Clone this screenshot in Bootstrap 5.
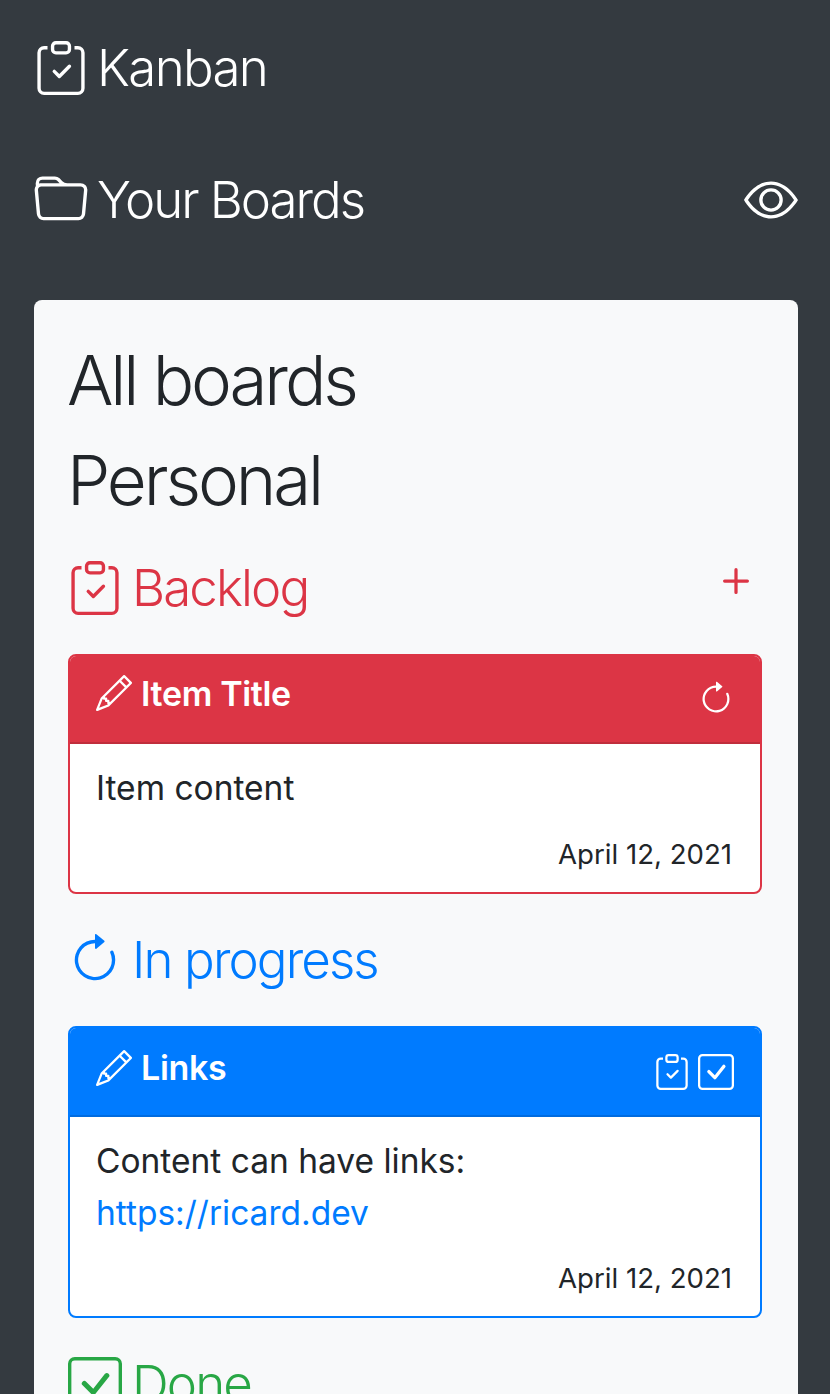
<!DOCTYPE html>
<html lang="en">
<head>
    <meta charset="UTF-8">
    <meta name="viewport" content="width=device-width, initial-scale=1.0">
    <title>Kanban</title>

    <link href="https://cdn.jsdelivr.net/npm/bootstrap@5.3.0/dist/css/bootstrap.min.css" rel="stylesheet">
    <script src="https://cdn.jsdelivr.net/npm/bootstrap@5.3.0/dist/js/bootstrap.bundle.min.js"></script>

    <style>
        html, body {
            height: 100vh;
            overflow: hidden;
        }
        body {
            background-color: #343a40;
            font-family: "Inter", "Liberation Sans", sans-serif;
            font-size: 32px;
            color: #212529;
            padding: 40px 32px 0 34px;
        }
        .ico {
            width: 1em;
            height: 1em;
            fill: currentColor;
            flex: none;
        }
        .app-title, .boards-title {
            font-size: 51px;
            font-weight: 300;
            line-height: 56px;
            letter-spacing: -.033em;
            color: #fff;
            margin: 0;
            gap: 9px;
        }
        .boards-title {
            letter-spacing: -.04em;
        }
        .app-title .ico, .boards-title .ico {
            font-size: 54px;
        }
        .app-title {
            margin-bottom: 76px;
        }
        .boards-row {
            margin-bottom: 72px;
        }
        .boards-eye {
            color: #fff;
            font-size: 54px;
            line-height: 0;
        }
        .board-panel {
            background-color: #f8f9fa;
            border-radius: 8px;
            padding: 40px 36px 0 34px;
            min-height: 1200px;
        }
        .panel-title {
            font-size: 69px;
            font-weight: 300;
            line-height: 80px;
            letter-spacing: -.045em;
            margin: 0 0 20px -1px;
        }
        .panel-title + .column-row {
            margin-top: 40px;
        }
        .column-title {
            font-size: 51px;
            font-weight: 300;
            line-height: 56px;
            letter-spacing: -.037em;
            margin: 0;
            gap: 10px;
        }
        .column-title .ico {
            font-size: 54px;
        }
        .column-row {
            margin-bottom: 38px;
        }
        .column-add {
            font-size: 52px;
            line-height: 0;
            margin-top: -14px;
        }
        .tone-red { color: #dc3545; }
        .tone-blue { color: #007bff; }
        .tone-green { color: #28a745; }
        .item-card {
            border-width: 2px;
            border-radius: 8px;
            margin-bottom: 38px;
            background: #fff;
        }
        .item-card.tone-red { border-color: #dc3545; }
        .item-card.tone-blue { border-color: #007bff; }
        .item-card .card-header {
            color: #fff;
            padding: 0 26px;
            height: 88px;
            border-bottom: 2px solid rgba(0, 0, 0, .125);
            border-radius: 6px 6px 0 0;
            font-size: 34px;
            font-weight: 600;
            letter-spacing: -.01em;
        }
        .item-card.tone-red .card-header { background-color: #dc3545; }
        .item-card.tone-blue .card-header {
            background-color: #007bff;
            height: 89px;
        }
        .item-heading {
            gap: 9px;
            padding-bottom: 8px;
        }
        .tone-red .item-heading {
            padding-bottom: 12px;
        }
        .item-heading .ico {
            font-size: 36px;
        }
        .item-tools {
            gap: 8px;
            font-size: 36px;
            line-height: 0;
        }
        .item-card .card-body {
            color: #212529;
            padding: 18px 28px 18px 26px;
            font-size: 33.5px;
            line-height: 52px;
        }
        .item-text {
            margin-bottom: 20px;
        }
        .tone-blue .item-text {
            margin-bottom: 19px;
        }
        .item-text a {
            color: #007bff;
            text-decoration: none;
        }
        .item-date {
            font-size: 27.6px;
            line-height: 40px;
            text-align: right;
        }
    </style>
</head>
<body>

<svg width="0" height="0" class="position-absolute">
    <symbol id="i-clipboard" viewBox="0 0 16 16">
        <path fill-rule="evenodd" d="M10.854 7.146a.5.5 0 0 1 0 .708l-3 3a.5.5 0 0 1-.708 0l-1.5-1.5a.5.5 0 1 1 .708-.708L7.5 9.793l2.646-2.647a.5.5 0 0 1 .708 0z"/>
        <path d="M4 1.5H3a2 2 0 0 0-2 2V14a2 2 0 0 0 2 2h10a2 2 0 0 0 2-2V3.5a2 2 0 0 0-2-2h-1v1h1a1 1 0 0 1 1 1V14a1 1 0 0 1-1 1H3a1 1 0 0 1-1-1V3.5a1 1 0 0 1 1-1h1v-1z"/>
        <path d="M9.5 1a.5.5 0 0 1 .5.5v1a.5.5 0 0 1-.5.5h-3a.5.5 0 0 1-.5-.5v-1a.5.5 0 0 1 .5-.5h3zm-3-1A1.5 1.5 0 0 0 5 1.5v1A1.5 1.5 0 0 0 6.5 4h3A1.5 1.5 0 0 0 11 2.5v-1A1.5 1.5 0 0 0 9.5 0h-3z"/>
    </symbol>
    <symbol id="i-folder" viewBox="0 0 16 16">
        <path d="M.54 3.87.5 3a2 2 0 0 1 2-2h3.672a2 2 0 0 1 1.414.586l.828.828A2 2 0 0 0 9.828 3h3.982a2 2 0 0 1 1.992 2.181l-.637 7A2 2 0 0 1 13.174 14H2.826a2 2 0 0 1-1.991-1.819l-.637-7a1.99 1.99 0 0 1 .342-1.31zM2.19 4a1 1 0 0 0-.996 1.09l.637 7a1 1 0 0 0 .995.91h10.348a1 1 0 0 0 .995-.91l.637-7A1 1 0 0 0 13.81 4H2.19zm4.69-1.707A1 1 0 0 0 6.172 2H2.5a1 1 0 0 0-1 .981l.006.139C1.72 3.042 1.95 3 2.19 3h5.396l-.707-.707z"/>
    </symbol>
    <symbol id="i-eye" viewBox="0 0 16 16">
        <path d="M16 8s-3-5.5-8-5.5S0 8 0 8s3 5.5 8 5.5S16 8 16 8zM1.173 8a13.133 13.133 0 0 1 1.66-2.043C4.12 4.668 5.88 3.5 8 3.5c2.12 0 3.879 1.168 5.168 2.457A13.133 13.133 0 0 1 14.828 8c-.058.087-.122.183-.195.288-.335.48-.83 1.12-1.465 1.755C11.879 11.332 10.119 12.5 8 12.5c-2.12 0-3.879-1.168-5.168-2.457A13.134 13.134 0 0 1 1.172 8z"/>
        <path d="M8 5.5a2.5 2.5 0 1 0 0 5 2.5 2.5 0 0 0 0-5zM4.5 8a3.5 3.5 0 1 1 7 0 3.5 3.5 0 0 1-7 0z"/>
    </symbol>
    <symbol id="i-plus" viewBox="0 0 16 16">
        <path d="M8 4a.5.5 0 0 1 .5.5v3h3a.5.5 0 0 1 0 1h-3v3a.5.5 0 0 1-1 0v-3h-3a.5.5 0 0 1 0-1h3v-3A.5.5 0 0 1 8 4z"/>
    </symbol>
    <symbol id="i-arrow" viewBox="0 0 16 16">
        <path fill-rule="evenodd" d="M8 3a5 5 0 1 0 4.546 2.914.5.5 0 0 1 .908-.417A6 6 0 1 1 8 2v1z"/>
        <path d="M8 4.466V.534a.25.25 0 0 1 .41-.192l2.36 1.966c.12.1.12.284 0 .384L8.41 4.658A.25.25 0 0 1 8 4.466z"/>
    </symbol>
    <symbol id="i-pencil" viewBox="0 0 16 16">
        <path d="M12.146.146a.5.5 0 0 1 .708 0l3 3a.5.5 0 0 1 0 .708l-10 10a.5.5 0 0 1-.168.11l-5 2a.5.5 0 0 1-.65-.65l2-5a.5.5 0 0 1 .11-.168l10-10zM11.207 2.5 13.5 4.793 14.793 3.5 12.5 1.207 11.207 2.5zm1.586 3L10.5 3.207 4 9.707V10h.5a.5.5 0 0 1 .5.5v.5h.5a.5.5 0 0 1 .5.5v.5h.293l6.5-6.5zm-9.761 5.175-.106.106-1.528 3.821 3.821-1.528.106-.106A.5.5 0 0 1 5 12.5V12h-.5a.5.5 0 0 1-.5-.5V11h-.5a.5.5 0 0 1-.468-.325z"/>
    </symbol>
    <symbol id="i-check" viewBox="0 0 16 16">
        <path d="M14 1a1 1 0 0 1 1 1v12a1 1 0 0 1-1 1H2a1 1 0 0 1-1-1V2a1 1 0 0 1 1-1h12zM2 0a2 2 0 0 0-2 2v12a2 2 0 0 0 2 2h12a2 2 0 0 0 2-2V2a2 2 0 0 0-2-2H2z"/>
        <path d="M10.97 4.97a.75.75 0 0 1 1.071 1.05l-3.992 4.99a.75.75 0 0 1-1.08.02L4.324 8.384a.75.75 0 1 1 1.06-1.06l2.094 2.093 3.473-4.425a.267.267 0 0 1 .02-.022z"/>
    </symbol>
</svg>

<h1 class="app-title d-flex align-items-center">
    <svg class="ico"><use href="#i-clipboard"/></svg>
    <span>Kanban</span>
</h1>

<div class="boards-row d-flex align-items-center justify-content-between">
    <h2 class="boards-title d-flex align-items-center">
        <svg class="ico"><use href="#i-folder"/></svg>
        <span>Your Boards</span>
    </h2>
    <div class="boards-eye"><svg class="ico"><use href="#i-eye"/></svg></div>
</div>

<main class="board-panel">
    <h2 class="panel-title">All boards</h2>
    <h2 class="panel-title">Personal</h2>

    <div class="column-row d-flex align-items-center justify-content-between tone-red">
        <h3 class="column-title d-flex align-items-center">
            <svg class="ico"><use href="#i-clipboard"/></svg>
            <span>Backlog</span>
        </h3>
        <div class="column-add"><svg class="ico"><use href="#i-plus"/></svg></div>
    </div>

    <div class="card item-card tone-red">
        <div class="card-header d-flex align-items-center justify-content-between">
            <div class="item-heading d-flex align-items-center">
                <svg class="ico"><use href="#i-pencil"/></svg>
                <span>Item Title</span>
            </div>
            <div class="item-tools d-flex">
                <svg class="ico"><use href="#i-arrow"/></svg>
            </div>
        </div>
        <div class="card-body">
            <div class="item-text">Item content</div>
            <div class="item-date">April 12, 2021</div>
        </div>
    </div>

    <div class="column-row d-flex align-items-center tone-blue">
        <h3 class="column-title d-flex align-items-center">
            <svg class="ico"><use href="#i-arrow"/></svg>
            <span>In progress</span>
        </h3>
    </div>

    <div class="card item-card tone-blue">
        <div class="card-header d-flex align-items-center justify-content-between">
            <div class="item-heading d-flex align-items-center">
                <svg class="ico"><use href="#i-pencil"/></svg>
                <span>Links</span>
            </div>
            <div class="item-tools d-flex">
                <svg class="ico"><use href="#i-clipboard"/></svg>
                <svg class="ico"><use href="#i-check"/></svg>
            </div>
        </div>
        <div class="card-body">
            <div class="item-text">Content can have links:<br><a href="#">https://ricard.dev</a></div>
            <div class="item-date">April 12, 2021</div>
        </div>
    </div>

    <div class="column-row d-flex align-items-center tone-green">
        <h3 class="column-title d-flex align-items-center">
            <svg class="ico"><use href="#i-check"/></svg>
            <span>Done</span>
        </h3>
    </div>
</main>

</body>
</html>
